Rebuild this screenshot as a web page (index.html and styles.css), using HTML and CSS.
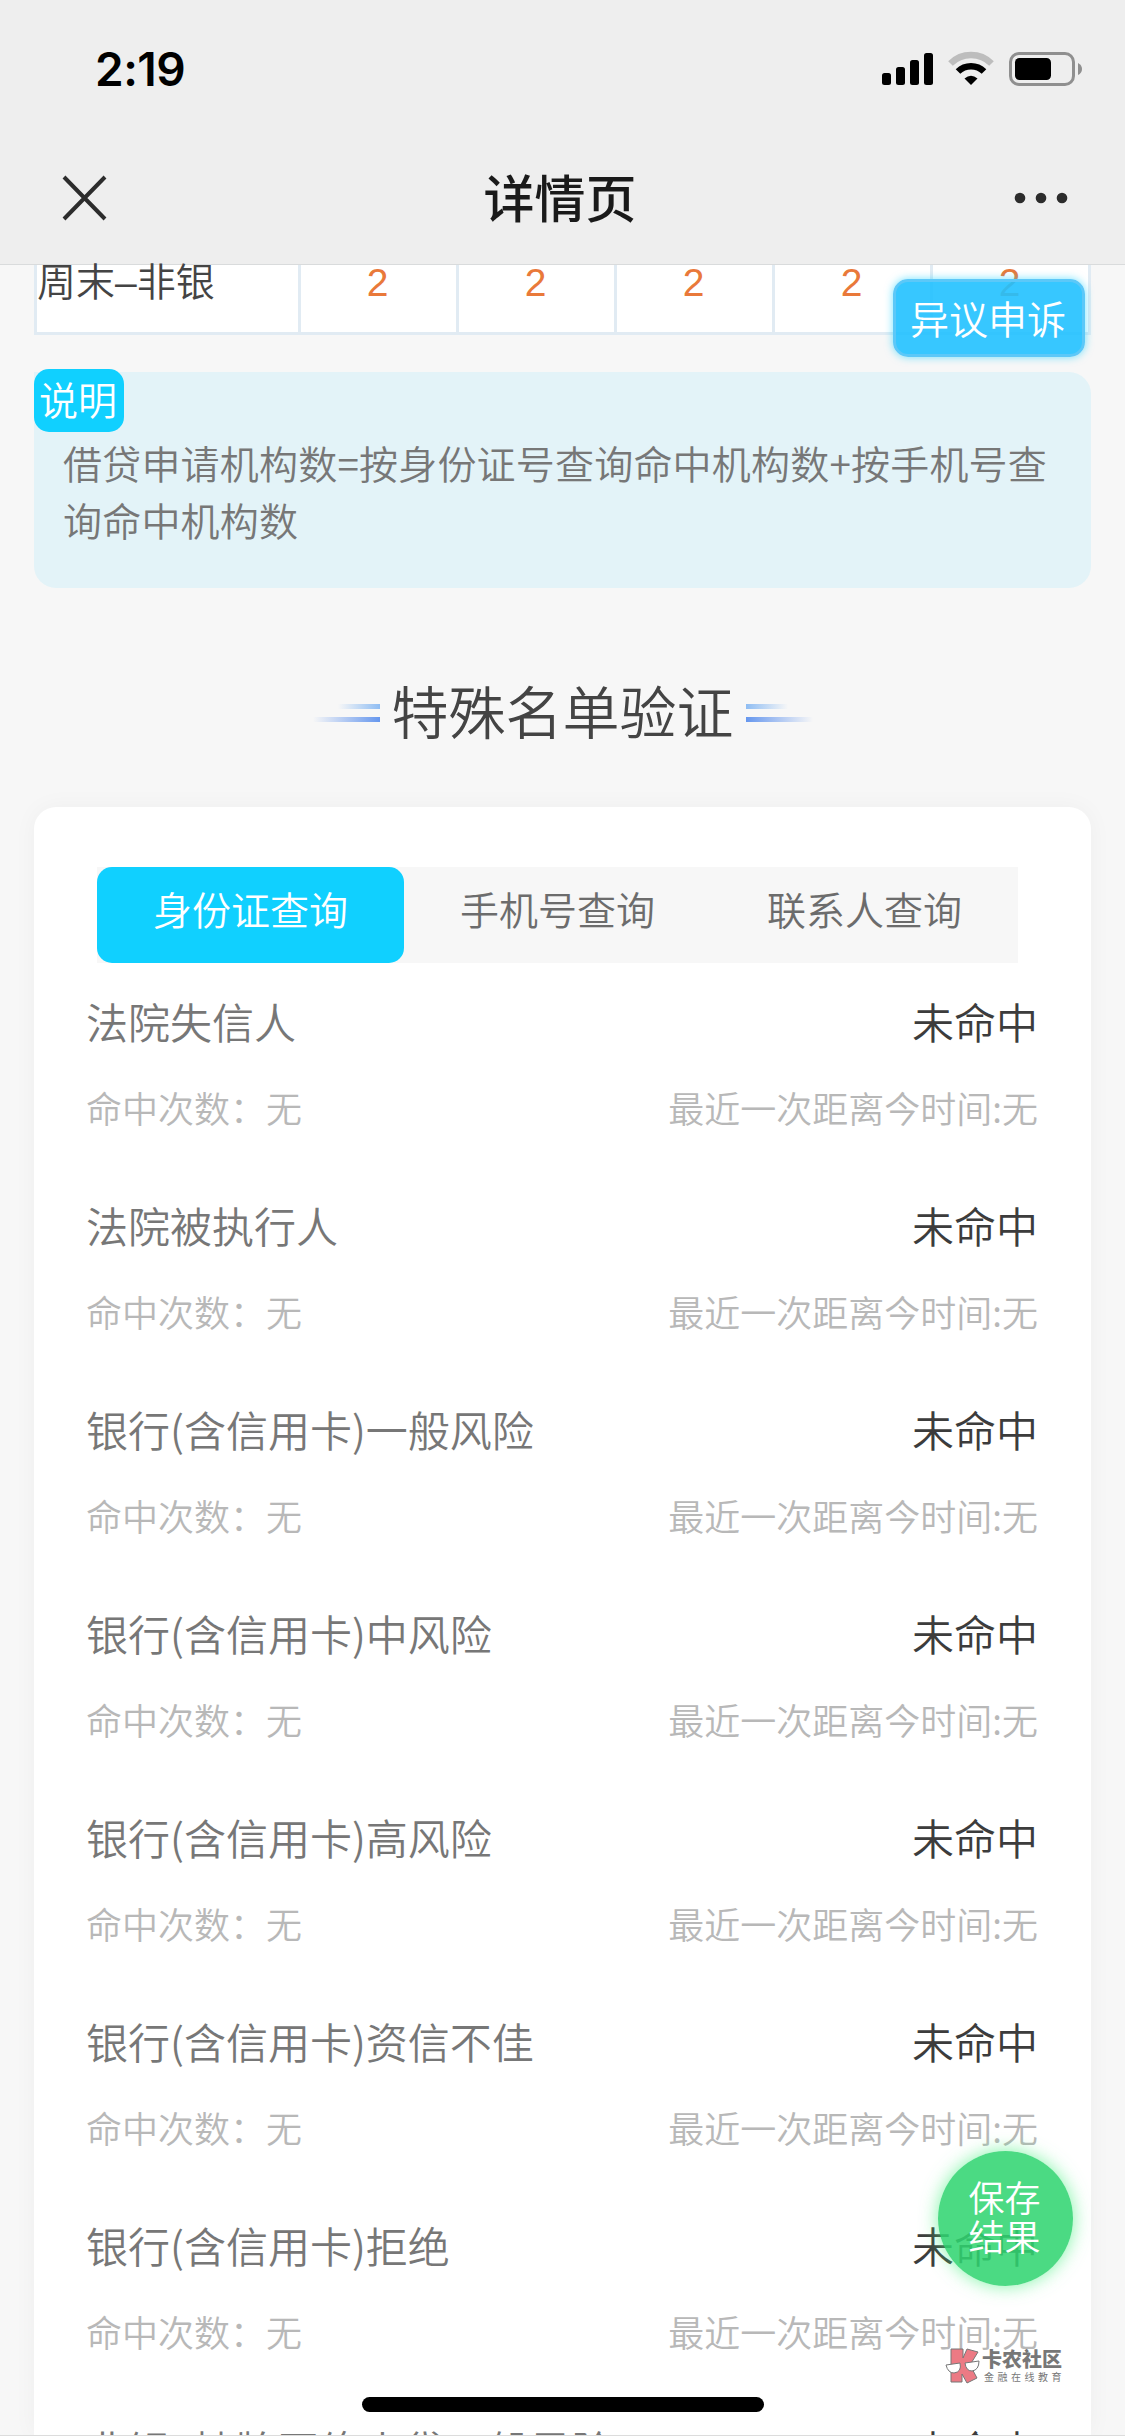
FILE: index.html
```html
<!DOCTYPE html>
<html lang="zh-CN">
<head>
    <meta charset="UTF-8">
    <title>详情页</title>
    <meta name="viewport" content="width=device-width, initial-scale=1.0">
    <link rel="stylesheet" href="styles.css">
</head>
<body>
    <header class="header">
        <div class="status-bar">
            <span class="time">2:19</span>
            <svg class="status-icons" width="202" height="36" viewBox="0 0 202 36">
                <!-- Signal -->
                <rect x="1" y="22" width="9" height="12" rx="2.5"/>
                <rect x="15" y="16" width="9" height="18" rx="2.5"/>
                <rect x="29" y="9" width="9" height="25" rx="2.5"/>
                <rect x="43" y="2" width="9" height="32" rx="2.5"/>
                <!-- Wifi -->
                <path d="M69.5 12.5 A29 29 0 0 1 110.5 12.5" fill="none" stroke="#bdbdbd" stroke-width="6.5"/>
                <path d="M77 20.5 A18.5 18.5 0 0 1 103 20.5" fill="none" stroke="#000" stroke-width="6.5"/>
                <path d="M83.5 27.5 Q90 22 96.5 27.5 L90 34 Z"/>
                <!-- Battery -->
                <rect x="129.5" y="2.5" width="63" height="31" rx="8.5" fill="none" stroke="#8f8f8f" stroke-width="3"/>
                <rect x="134" y="7" width="36" height="22" rx="4.5"/>
                <path d="M197 12 Q201 14 201 18 Q201 22 197 24 Z" fill="#8f8f8f"/>
            </svg>
        </div>
        <div class="nav-bar">
            <svg class="close" width="45" height="46" viewBox="0 0 45 46">
                <path d="M2 2 L43 44 M43 2 L2 44" stroke="#2c2c2c" stroke-width="4"/>
            </svg>
            <h1>详情页</h1>
            <svg class="more" width="56" height="14" viewBox="0 0 56 14">
                <circle cx="7" cy="7" r="5.3"/>
                <circle cx="28" cy="7" r="5.3"/>
                <circle cx="49" cy="7" r="5.3"/>
            </svg>
        </div>
    </header>

    <main class="page">
        <div class="table-row">
            <div class="cell name">周末–非银</div>
            <div class="cell">2</div>
            <div class="cell">2</div>
            <div class="cell">2</div>
            <div class="cell">2</div>
            <div class="cell">2</div>
        </div>

        <div class="notice">
            <span class="notice-tag">说明</span>
            <p>借贷申请机构数=按身份证号查询命中机构数+按手机号查<br>询命中机构数</p>
        </div>

        <h2 class="section-title">
            <span class="lines"></span>
            特殊名单验证
            <span class="lines right"></span>
        </h2>

        <div class="card">
            <div class="tabs">
                <div class="tab active">身份证查询</div>
                <div class="tab">手机号查询</div>
                <div class="tab">联系人查询</div>
            </div>
            <div class="item">
                <div class="item-top"><span>法院失信人</span><b>未命中</b></div>
                <div class="item-sub"><span>命中次数：无</span><span>最近一次距离今时间:无</span></div>
            </div>
            <div class="item">
                <div class="item-top"><span>法院被执行人</span><b>未命中</b></div>
                <div class="item-sub"><span>命中次数：无</span><span>最近一次距离今时间:无</span></div>
            </div>
            <div class="item">
                <div class="item-top"><span>银行(含信用卡)一般风险</span><b>未命中</b></div>
                <div class="item-sub"><span>命中次数：无</span><span>最近一次距离今时间:无</span></div>
            </div>
            <div class="item">
                <div class="item-top"><span>银行(含信用卡)中风险</span><b>未命中</b></div>
                <div class="item-sub"><span>命中次数：无</span><span>最近一次距离今时间:无</span></div>
            </div>
            <div class="item">
                <div class="item-top"><span>银行(含信用卡)高风险</span><b>未命中</b></div>
                <div class="item-sub"><span>命中次数：无</span><span>最近一次距离今时间:无</span></div>
            </div>
            <div class="item">
                <div class="item-top"><span>银行(含信用卡)资信不佳</span><b>未命中</b></div>
                <div class="item-sub"><span>命中次数：无</span><span>最近一次距离今时间:无</span></div>
            </div>
            <div class="item">
                <div class="item-top"><span>银行(含信用卡)拒绝</span><b>未命中</b></div>
                <div class="item-sub"><span>命中次数：无</span><span>最近一次距离今时间:无</span></div>
            </div>
            <div class="item last">
                <div class="item-top"><span>非银–持牌网络小贷一般风险</span><b>未命中</b></div>
            </div>
        </div>
    </main>

    <!-- Floating buttons -->
    <div class="appeal-btn">异议申诉</div>
    <div class="save-btn">保存<br>结果</div>

    <!-- Watermark -->
    <div class="watermark">
        <svg width="36" height="36" viewBox="0 0 36 36">
            <path d="M6 1 L18 1 L18 10 L22 1 L33 4 L25 17 L32 30 L22 35 L17 26 L17 34 L6 34 Z" fill="#ec7a84" stroke="#777" stroke-width="1"/>
            <path d="M1 17 L15 15 Q17 24 9 25 Q3 25 1 17 Z" fill="#fff" stroke="#777" stroke-width="1"/>
            <path d="M20 15 L34 13 Q34 22 27 23 Q21 23 20 15 Z" fill="#fff" stroke="#777" stroke-width="1"/>
        </svg>
        <div class="watermark-text">
            <strong>卡农社区</strong>
            <small>金融在线教育</small>
        </div>
    </div>

    <div class="home-indicator"></div>
</body>
</html>
```

FILE: styles.css
```css
* {
    box-sizing: border-box;
}

body {
    margin: 0;
    width: 1125px;
    height: 2436px;
    overflow: hidden;
    position: relative;
    background-color: #f7f7f7;
    border-bottom: 1px solid #dcdcdc;
    font-family: "Noto Sans CJK SC", sans-serif;
    font-weight: 350;
    color: #444;
}

/* Header */
.header {
    height: 265px;
    background-color: #eeeeee;
    border-bottom: 1px solid #d9dbdc;
}

.status-bar {
    display: flex;
    justify-content: space-between;
    align-items: center;
    height: 138px;
    padding: 0 42px 0 95px;
}

.time {
    font-family: Inter, sans-serif;
    font-size: 46px;
    font-weight: 600;
    letter-spacing: -0.5px;
    color: #000;
}

.nav-bar {
    display: flex;
    justify-content: space-between;
    align-items: center;
    height: 119px;
    padding: 0 56px 0 62px;
}

.nav-bar h1 {
    margin: 0;
    padding-bottom: 3px;
    font-size: 51px;
    font-weight: 500;
    color: #1a1a1a;
}

.more {
    fill: #2c2c2c;
}

/* Content */
.page {
    padding: 0 34px;
}

.table-row {
    display: grid;
    grid-template-columns: 261px repeat(5, 1fr);
    width: 1057px;
    height: 70px;
    border: 3px solid #e1ebf3;
    border-top: none;
    background-color: #fff;
}

.cell {
    height: 67px;
    padding-right: 2px;
    border-left: 3px solid #e1ebf3;
    font-family: "Liberation Sans", "Noto Sans CJK SC", sans-serif;
    font-size: 39px;
    line-height: 36px;
    text-align: center;
    color: #e9793a;
}

.cell.name {
    border-left: none;
    text-align: left;
    color: #444;
}

.notice {
    height: 216px;
    margin-top: 37px;
    border-radius: 0 22px 22px 22px;
    background-color: #e3f3f8;
    font-size: 39px;
    line-height: 57px;
    color: #777;
}

.notice-tag {
    display: block;
    width: 90px;
    height: 63px;
    padding-left: 5px;
    border-radius: 15px;
    background-color: #10d0ff;
    line-height: 59px;
    color: #fff;
    transform: translateY(-3px);
}

.notice p {
    margin: -1px 0 0;
    padding-left: 29px;
    letter-spacing: 0.2px;
    white-space: nowrap;
}

.section-title {
    display: flex;
    justify-content: center;
    align-items: center;
    gap: 12px;
    margin: 0;
    height: 219px;
    padding-top: 22px;
    font-size: 57px;
    font-weight: 350;
    color: #444;
}

.lines {
    width: 67px;
    height: 18px;
    margin-top: 9px;
    background:
        linear-gradient(to right, transparent, #8fbdf3) right top / 42px 5px no-repeat,
        linear-gradient(to right, transparent, #6697ee) right bottom / 67px 5px no-repeat;
}

.lines.right {
    transform: scaleX(-1);
}

/* List card */
.card {
    height: 1628px;
    padding-top: 60px;
    overflow: hidden;
    border-radius: 22px 22px 0 0;
    background-color: #fff;
    box-shadow: 0 0 24px rgba(0, 0, 0, 0.04);
}

.tabs {
    display: flex;
    width: 921px;
    height: 96px;
    margin-left: 63px;
    background-color: #f7f7f7;
}

.tab {
    flex: 1;
    font-size: 39px;
    line-height: 83px;
    text-align: center;
    color: #6c6c6c;
}

.tab.active {
    border-radius: 15px;
    background-color: #10d0ff;
    color: #fff;
}

.item {
    height: 204px;
    padding: 28px 53px 0 52px;
}

.item.last {
    padding-top: 32px;
    font-family: "Liberation Sans", "Noto Sans CJK SC", sans-serif;
}

.item-top,
.item-sub {
    display: flex;
    justify-content: space-between;
    white-space: nowrap;
}

.item-top {
    height: 60px;
    font-size: 42px;
    line-height: 60px;
    color: #777;
}

.item-top b {
    font-weight: 350;
    color: #3c3c3c;
}

.item-sub {
    margin-top: 30px;
    font-size: 36px;
    line-height: 52px;
    color: #b8b8b8;
}

/* Floating buttons */
.appeal-btn {
    position: absolute;
    left: 893px;
    top: 279px;
    width: 192px;
    height: 78px;
    padding-right: 2px;
    border: 3px solid #5cc8f8;
    border-radius: 15px;
    background-color: rgba(33, 193, 255, 0.9);
    box-shadow: 0 0 9px rgba(16, 208, 255, 0.6);
    font-size: 39px;
    line-height: 71px;
    text-align: center;
    color: #fff;
}

.save-btn {
    position: absolute;
    left: 938px;
    top: 2151px;
    width: 135px;
    height: 135px;
    padding: 26px 2px 0 0;
    border-radius: 50%;
    background-color: rgba(48, 213, 112, 0.87);
    box-shadow: 0 0 18px rgba(76, 240, 130, 0.7);
    font-size: 36px;
    line-height: 39px;
    text-align: center;
    color: #fff;
}

.watermark {
    position: absolute;
    left: 945px;
    top: 2348px;
    display: flex;
    gap: 1px;
    color: #777;
    white-space: nowrap;
}

.watermark-text {
    display: flex;
    flex-direction: column;
}

.watermark strong {
    font-size: 20px;
    font-weight: 900;
    line-height: 21px;
}

.watermark small {
    padding-left: 2px;
    font-size: 10px;
    font-weight: 400;
    letter-spacing: 3.5px;
    line-height: 15px;
}

.home-indicator {
    position: absolute;
    left: 362px;
    top: 2397px;
    width: 402px;
    height: 15px;
    border-radius: 8px;
    background-color: #000;
}
```
